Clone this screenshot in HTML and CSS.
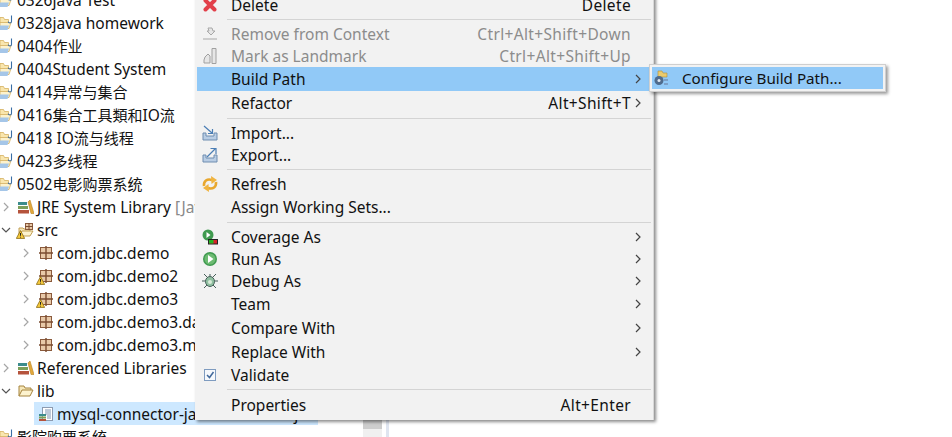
FILE: index.html
```html
<!DOCTYPE html>
<html lang="zh-CN">
<head>
    <meta charset="UTF-8">
    <meta name="viewport" content="width=device-width, initial-scale=1.0">
    <title>Build Path</title>
    <link rel="stylesheet" href="styles.css">
</head>
<body>
    <svg class="defs" width="0" height="0">
        <defs>
            <symbol id="project" viewBox="0 0 14 16">
                <path d="M0 2.500h3.500l1 2h4v4H0z" fill="#f9e6ae" stroke="#d4b060" stroke-width=".8"/>
                <path d="M0 7.500h11l-2 6H0z" fill="#fdf2cc" stroke="#d4b060" stroke-width=".8"/>
                <path d="M0 10.500h9l-1.500 4.500H0z" fill="#a5c6e8"/>
                <path d="M11.500 .5v6c0 2-3 2-3.300 .2" fill="none" stroke="#3a6ea5" stroke-width="1.100"/>
            </symbol>
            <symbol id="library" viewBox="0 0 16 16">
                <rect x="0" y="3" width="9" height="3" fill="#3c8c8c"/>
                <rect x="0" y="7" width="10" height="3" fill="#7ca05a"/>
                <rect x="0" y="11" width="11" height="3.500" fill="#b5533c"/>
                <path d="M10 3l2-2 4 13.500h-3z" fill="#e3a93c" stroke="#b98324" stroke-width=".6"/>
            </symbol>
            <symbol id="package" viewBox="0 0 16 16">
                <rect x="2.500" y="2.500" width="11" height="11" fill="#e8c9a8" stroke="#8a5a3c"/>
                <path d="M8 1v14M1 8h14" stroke="#7a4c30" stroke-width="1.400"/>
            </symbol>
            <symbol id="srcfolder" viewBox="0 0 16 16">
                <path d="M1 14V6h4l1 1h6v2" fill="#f6e7b8" stroke="#c29f55"/>
                <path d="M1 14l3-5h11l-3 5z" fill="#fdf3cf" stroke="#c29f55"/>
                <rect x="7.500" y="1.500" width="7" height="6" fill="#e8c9a8" stroke="#8a5a3c"/>
                <path d="M11 1v7M7 4.500h8" stroke="#7a4c30"/>
            </symbol>
            <symbol id="warn" viewBox="0 0 8 8">
                <path d="M4 .5L7.700 7.500H.3z" fill="#f5c93c" stroke="#8a6a14" stroke-width=".7"/>
                <path d="M4 2.600v2.600M4 5.900v.8" stroke="#222" stroke-width=".9"/>
            </symbol>
            <symbol id="chevron" viewBox="0 0 8 10">
                <path d="M2 1l4 4-4 4" fill="none" stroke="currentColor" stroke-width="1.200"/>
            </symbol>
            <symbol id="folder" viewBox="0 0 16 16">
                <path d="M1 13V3h5l1 2h6v2" fill="#f6e7b8" stroke="#a5843f"/>
                <path d="M1 13l3-6h11l-3 6z" fill="#fdf3cf" stroke="#a5843f"/>
            </symbol>
        </defs>
    </svg>

    <div class="tree">
        <div class="row"><svg class="ico project"><use href="#project"/></svg>0326java Test</div>
        <div class="row"><svg class="ico project"><use href="#project"/></svg>0328java homework</div>
        <div class="row"><svg class="ico project"><use href="#project"/></svg>0404<span class="cn">作业</span></div>
        <div class="row"><svg class="ico project"><use href="#project"/></svg>0404Student System</div>
        <div class="row"><svg class="ico project"><use href="#project"/></svg>0414<span class="cn">异常与集合</span></div>
        <div class="row"><svg class="ico project"><use href="#project"/></svg>0416<span class="cn">集合工具類和</span>IO<span class="cn">流</span></div>
        <div class="row"><svg class="ico project"><use href="#project"/></svg>0418 IO<span class="cn">流与线程</span></div>
        <div class="row"><svg class="ico project"><use href="#project"/></svg>0423<span class="cn">多线程</span></div>
        <div class="row"><svg class="ico project"><use href="#project"/></svg>0502<span class="cn">电影购票系统</span></div>
        <div class="row lvl1"><svg class="arrow"><use href="#chevron"/></svg><svg class="ico"><use href="#library"/></svg>JRE System Library <span class="muted">[JavaSE-1.8]</span></div>
        <div class="row lvl1"><svg class="arrow open"><use href="#chevron"/></svg><span class="ico-wrap"><svg class="ico"><use href="#srcfolder"/></svg><svg class="warn"><use href="#warn"/></svg></span>src</div>
        <div class="row lvl2"><svg class="arrow"><use href="#chevron"/></svg><svg class="ico"><use href="#package"/></svg>com.jdbc.demo</div>
        <div class="row lvl2"><svg class="arrow"><use href="#chevron"/></svg><span class="ico-wrap"><svg class="ico"><use href="#package"/></svg><svg class="warn"><use href="#warn"/></svg></span>com.jdbc.demo2</div>
        <div class="row lvl2"><svg class="arrow"><use href="#chevron"/></svg><span class="ico-wrap"><svg class="ico"><use href="#package"/></svg><svg class="warn"><use href="#warn"/></svg></span>com.jdbc.demo3</div>
        <div class="row lvl2"><svg class="arrow"><use href="#chevron"/></svg><svg class="ico"><use href="#package"/></svg>com.jdbc.demo3.dao</div>
        <div class="row lvl2"><svg class="arrow"><use href="#chevron"/></svg><svg class="ico"><use href="#package"/></svg>com.jdbc.demo3.model</div>
        <div class="row lvl1"><svg class="arrow"><use href="#chevron"/></svg><svg class="ico"><use href="#library"/></svg>Referenced Libraries</div>
        <div class="row lvl1"><svg class="arrow open"><use href="#chevron"/></svg><svg class="ico"><use href="#folder"/></svg>lib</div>
        <div class="row selected"><svg class="ico" viewBox="0 0 16 16"><rect x="4.500" y="1.500" width="10" height="13" fill="#fff" stroke="#8c9bb0"/><path d="M7 4h6M7 6h6M7 8h6M9 10h4M9 12h4" stroke="#7d94b4"/><rect x="1" y="8" width="7" height="2" fill="#3c8c8c"/><rect x="1" y="10.500" width="7" height="2" fill="#7ca05a"/><rect x="1" y="13" width="7" height="2" fill="#b5533c"/></svg>mysql-connector-java-5.1.47-bin.jar</div>
        <div class="row"><svg class="ico project"><use href="#project"/></svg><span class="cn">影院购票系统</span></div>
    </div>

    <div class="scrollbar"><div class="thumb"></div></div>

    <div class="menu">
        <div class="item"><svg class="mi" viewBox="0 0 16 16"><path d="M3.500 3.500l9 9M12.500 3.500l-9 9" stroke="#e2404a" stroke-width="4" stroke-linecap="round"/></svg><span class="label">Delete</span><span class="key">Delete</span></div>
        <div class="sep"></div>
        <div class="item off"><svg class="mi" viewBox="0 0 16 16"><path d="M6 2h4l1 3h2l-4 4-4-4h2zM1 13h14" fill="#e6e6e6" stroke="#a8a8a8"/></svg><span class="label">Remove from Context</span><span class="key">Ctrl+Alt+Shift+Down</span></div>
        <div class="item off"><svg class="mi" viewBox="0 0 16 16"><path d="M10 .5h4v15h-4zM3 9l3-3 2 2v7H2v-3z" fill="#e6e6e6" stroke="#a0a0a0"/></svg><span class="label">Mark as Landmark</span><span class="key">Ctrl+Alt+Shift+Up</span></div>
        <div class="item plain active"><span class="mi"></span><span class="label">Build Path</span><svg class="more"><use href="#chevron"/></svg></div>
        <div class="item plain"><span class="mi"></span><span class="label">Refactor</span><span class="key">Alt+Shift+T</span><svg class="more"><use href="#chevron"/></svg></div>
        <div class="sep"></div>
        <div class="item"><svg class="mi" viewBox="0 0 16 16"><path d="M1 8v7h14V8h-3v3H4V8z" fill="#b9cde4" stroke="#6f8db0"/><path d="M2 1l8 7M10.500 4v4.500H6" fill="none" stroke="#4b7eb5" stroke-width="1.200"/></svg><span class="label">Import...</span></div>
        <div class="item"><svg class="mi" viewBox="0 0 16 16"><path d="M1 8v7h14V8h-3v3H4V8z" fill="#b9cde4" stroke="#6f8db0"/><path d="M5 10l8-8M8.500 1.500H14V7" fill="none" stroke="#4b7eb5" stroke-width="1.200"/></svg><span class="label">Export...</span></div>
        <div class="sep"></div>
        <div class="item"><svg class="mi" viewBox="0 0 16 16"><path d="M2 10C1.500 5 5 2.500 10 4" fill="none" stroke="#e8a72e" stroke-width="2.600"/><path d="M9 0l6 4-5.500 4z" fill="#f0b440"/><path d="M14 6c.5 5-3 7.500-8 6" fill="none" stroke="#e8a72e" stroke-width="2.600"/><path d="M7 16l-6-4 5.500-4z" fill="#f0b440"/></svg><span class="label">Refresh</span></div>
        <div class="item plain"><span class="mi"></span><span class="label">Assign Working Sets...</span></div>
        <div class="sep"></div>
        <div class="item"><svg class="mi" viewBox="0 0 16 16"><circle cx="6" cy="6" r="5.500" fill="#3f9a4f"/><path d="M4.500 3l4 3-4 3z" fill="#fff"/><rect x="6.500" y="10.500" width="9" height="4.500" fill="#d8232a" stroke="#222"/><rect x="7" y="11" width="4.500" height="3.500" fill="#22b522"/></svg><span class="label">Coverage As</span><svg class="more"><use href="#chevron"/></svg></div>
        <div class="item"><svg class="mi" viewBox="0 0 16 16"><circle cx="8" cy="8" r="7" fill="#3f9a4f"/><circle cx="8" cy="8" r="5.500" fill="#6dbb72"/><path d="M6 4l5.500 4L6 12z" fill="#fff"/></svg><span class="label">Run As</span><svg class="more"><use href="#chevron"/></svg></div>
        <div class="item"><svg class="mi" viewBox="0 0 16 16"><path d="M2 1l4 4M14 1l-4 4M0 8h4M16 8h-4M2 15l4-4M14 15l-4-4M8 1v2" stroke="#47605a"/><ellipse cx="8" cy="8.500" rx="4.500" ry="5" fill="#8fbfa0" stroke="#47605a"/><circle cx="8" cy="9" r="2" fill="#d8ebd8"/></svg><span class="label">Debug As</span><svg class="more"><use href="#chevron"/></svg></div>
        <div class="item plain"><span class="mi"></span><span class="label">Team</span><svg class="more"><use href="#chevron"/></svg></div>
        <div class="item plain"><span class="mi"></span><span class="label">Compare With</span><svg class="more"><use href="#chevron"/></svg></div>
        <div class="item plain"><span class="mi"></span><span class="label">Replace With</span><svg class="more"><use href="#chevron"/></svg></div>
        <div class="item"><svg class="mi" viewBox="0 0 16 16"><rect x="2.500" y="2.500" width="11" height="11" fill="#f5f8fc" stroke="#7f9cc0"/><path d="M5 8l2.500 2.500L11.500 5" fill="none" stroke="#41689a" stroke-width="1.500"/></svg><span class="label">Validate</span></div>
        <div class="sep"></div>
        <div class="item plain"><span class="mi"></span><span class="label">Properties</span><span class="key">Alt+Enter</span></div>
    </div>

    <div class="submenu">
        <div class="sub-item">
            <svg class="mi" viewBox="0 0 16 16"><path d="M5 1h4l1 2h4v4H5z" fill="#eacb6e" stroke="#b08f3a" stroke-width=".6"/><circle cx="6" cy="10.500" r="4.500" fill="#4f6b8c"/><circle cx="6" cy="10.500" r="1.500" fill="#dfe8f2"/><path d="M11 9h4v2h-4zM11 13h4v2h-4z" fill="#7ca0c8"/></svg>
            <span>Configure Build Path...</span>
        </div>
    </div>
</body>
</html>
```

FILE: styles.css
```css
* {
    margin: 0;
    padding: 0;
    box-sizing: border-box;
}

html, body {
    height: 100%;
    overflow: hidden;
}

body {
    position: relative;
    background-color: #fff;
    color: #111;
    font-family: "Noto Sans", "Noto Sans CJK SC", sans-serif;
    font-size: 15.5px;
}

.defs {
    position: absolute;
}

/* Arbre du projet */
.tree {
    width: 318px;
    margin-top: -12px;
}

.row {
    display: flex;
    align-items: center;
    height: 23px;
    padding-left: 17px;
    white-space: pre;
    position: relative;
}

.row.lvl1 {
    padding-left: 2px;
}

.row.lvl2 {
    padding-left: 22px;
}

.row.selected {
    margin-left: 34px;
    padding-left: 4px;
    background-color: #cde8ff;
}

.cn {
    font-size: 15px;
}

.ico {
    width: 16px;
    height: 16px;
    flex: none;
    margin-right: 3px;
}

.ico.project {
    position: absolute;
    left: 0;
    width: 14px;
}

.ico-wrap {
    position: relative;
    display: flex;
    flex: none;
}

.warn {
    position: absolute;
    left: -2px;
    bottom: -1px;
    width: 9px;
    height: 9px;
}

.arrow {
    width: 8px;
    height: 10px;
    margin-right: 8px;
    flex: none;
    color: #a6a6a6;
}

.arrow.open {
    transform: rotate(90deg);
    color: #555;
}

.muted {
    color: #8a8a8a;
}

/* Barre de défilement derrière le menu */
.scrollbar {
    position: absolute;
    left: 363px;
    top: 400px;
    width: 26px;
    height: 37px;
    border-right: 3px solid #dfe5f0;
}

.thumb {
    width: 19px;
    height: 37px;
    background-color: #f0f0f0;
    border-top: 29px solid #cdcdcd;
}

/* Menu contextuel */
.menu {
    position: absolute;
    left: 195px;
    top: -7px;
    width: 459px;
    background-color: #f2f2f2;
    padding: 1px 2px 3px;
    box-shadow: 2px 2px 3px rgba(0, 0, 0, 0.45);
    border-right: 1px solid #d8d8d8;
}

.item {
    display: flex;
    align-items: center;
    height: 22px;
    padding-right: 20px;
    white-space: nowrap;
}

.item.plain {
    height: 24px;
}

.item.off {
    color: #8c8c8c;
}

.item.active {
    background-color: #91c9f7;
}

.mi {
    display: block;
    width: 16px;
    height: 16px;
    flex: none;
    margin: 0 13px 0 5px;
}

.label {
    flex: 1;
}

.key {
    letter-spacing: 0.35px;
}

.more {
    width: 8px;
    height: 10px;
    margin-left: 3px;
    margin-right: -11px;
    flex: none;
    color: #444;
}

.sep {
    height: 1px;
    margin: 3px 0 3px 30px;
    background-color: #d4d4d4;
}

/* Sous-menu */
.submenu {
    position: absolute;
    left: 649px;
    top: 64px;
    width: 237px;
    height: 28px;
    padding: 2px;
    background-color: #f2f2f2;
    border: 1px solid #cfcfcf;
    box-shadow: 2px 2px 3px rgba(0, 0, 0, 0.4);
}

.sub-item {
    display: flex;
    align-items: center;
    height: 100%;
    background-color: #91c9f7;
    white-space: nowrap;
    font-size: 15.2px;
}

.sub-item .mi {
    margin: 0 13px 0 1px;
}
```
